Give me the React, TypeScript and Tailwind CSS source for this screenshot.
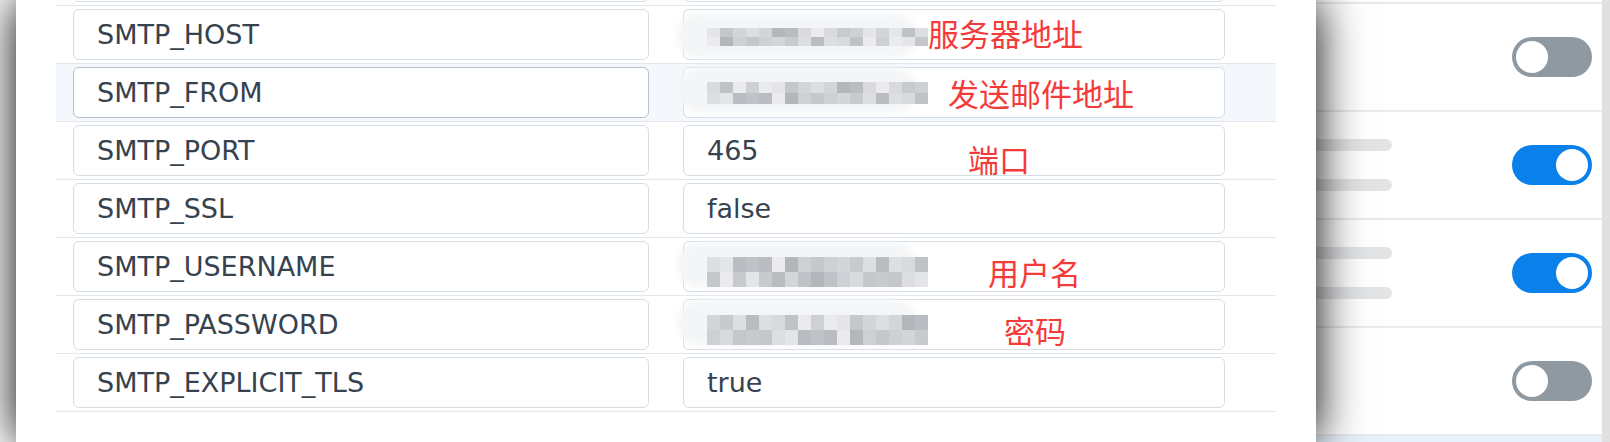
import type { ReactNode } from "react";

const SHADES = [
  "bg-[#c5c7cb]",
  "bg-[#d9dadd]",
  "bg-[#b9bcc1]",
  "bg-[#e4e5e7]",
  "bg-[#cdd0d4]",
  "bg-[#b3b6bb]",
  "bg-[#dddee1]",
  "bg-[#c9cacd]",
  "bg-[#ebebed]",
  "bg-[#bfc2c6]",
  "bg-[#d3d5d8]",
];

type Row = {
  name: string;
  value?: string;
  mosaic?: { rows: number; cellH: number; shift: number; seed: number };
  hover?: boolean;
};

// first row is scrolled almost out of view; only its bottom edge shows
const ROWS: Row[] = [
  { name: "", value: "" },
  { name: "SMTP_HOST", mosaic: { rows: 2, cellH: 9, shift: 2, seed: 1 } },
  { name: "SMTP_FROM", mosaic: { rows: 2, cellH: 11, shift: 0, seed: 4 }, hover: true },
  { name: "SMTP_PORT", value: "465" },
  { name: "SMTP_SSL", value: "false" },
  { name: "SMTP_USERNAME", mosaic: { rows: 2, cellH: 15, shift: 5, seed: 2 } },
  { name: "SMTP_PASSWORD", mosaic: { rows: 2, cellH: 15, shift: 5, seed: 7 } },
  { name: "SMTP_EXPLICIT_TLS", value: "true" },
];

// red notes drawn over the screenshot, x relative to the modal
const NOTES = [
  { text: "服务器地址", cls: "left-[912px] top-[16px]" },
  { text: "发送邮件地址", cls: "left-[932px] top-[76px]" },
  { text: "端口", cls: "left-[952px] top-[142px]" },
  { text: "用户名", cls: "left-[972px] top-[255px]" },
  { text: "密码", cls: "left-[988px] top-[313px]" },
];

function Mosaic({ rows, cellH, shift, seed }: NonNullable<Row["mosaic"]>) {
  return (
    <div className="relative" style={{ marginTop: shift * 2 }}>
      <div className="absolute -left-[30px] -top-[14px] h-[44px] w-[240px] rounded-full bg-[#f3f5f7] blur-[3px]" />
      <div className="relative flex flex-col blur-[0.6px]">
        {Array.from({ length: rows }).map((_, r) => (
          <div key={r} className="flex">
            {Array.from({ length: 17 }).map((_, c) => (
              <div
                key={c}
                className={`w-[13px] ${SHADES[(c * 7 + r * 5 + seed * 3 + ((c * c) % 5)) % SHADES.length]}`}
                style={{ height: cellH }}
              />
            ))}
          </div>
        ))}
      </div>
    </div>
  );
}

function Field({ children, strong }: { children: ReactNode; strong?: boolean }) {
  return (
    <div
      className={`flex h-[51px] items-center rounded-[6px] border bg-white px-[23px] text-[27px] leading-none text-[#37424f] ${
        strong ? "border-[#b8bfc7]" : "border-[#d5dde6]"
      }`}
    >
      {children}
    </div>
  );
}

function Toggle({ on }: { on?: boolean }) {
  return (
    <div
      className={`flex h-[40px] w-[80px] items-center rounded-full p-[4px] ${
        on ? "justify-end bg-[#0a80ea]" : "justify-start bg-[#8f99a2]"
      }`}
    >
      <div className="h-[32px] w-[32px] rounded-full bg-white" />
    </div>
  );
}

function Skeleton() {
  return (
    <div className="flex w-[210px] flex-col gap-[28px]">
      <div className="h-[12px] rounded-full bg-[#e3e4e6]" />
      <div className="h-[12px] rounded-full bg-[#e3e4e6]" />
    </div>
  );
}

export default function App() {
  return (
    <div className="relative h-[442px] w-[1610px] overflow-hidden bg-white font-['DejaVu_Sans',sans-serif]">
      {/* page behind the dialog */}
      <div className="flex h-full">
        <div className="flex-1" />
        <div className="flex w-[420px] flex-col">
          <div className="mt-[2px] h-[2px] bg-[#e6ebf0]" />
          {[false, true, true, false].map((on, i) => (
            <div
              key={i}
              className="flex h-[108px] items-center justify-between border-b-2 border-[#e6ebf0] pr-[10px]"
            >
              {on ? <Skeleton /> : <div />}
              <Toggle on={on} />
            </div>
          ))}
          <div className="flex-1 bg-[#e8f1fb]" />
        </div>
        <div className="w-[8px] bg-[#e0e0e0]" />
      </div>

      {/* dialog */}
      <div className="absolute left-[16px] top-0 h-full w-[1300px] overflow-hidden bg-white px-[40px] shadow-[0_0_45px_rgba(0,0,0,1)]">
        <div className="-mt-[52px]">
          {ROWS.map((row, i) => (
            <div
              key={i}
              className={`flex h-[58px] items-start border-b border-[#e2e7ed] pl-[17px] pt-[3px] ${
                row.hover ? "bg-[#f4f8fc]" : ""
              }`}
            >
              <div className="w-[576px]">
                <Field strong={row.hover}>{row.name}</Field>
              </div>
              <div className="ml-[34px] w-[542px]">
                <Field>{row.mosaic ? <Mosaic {...row.mosaic} /> : row.value}</Field>
              </div>
            </div>
          ))}
        </div>

        {NOTES.map((n) => (
          <div
            key={n.text}
            className={`absolute ${n.cls} text-[31px] leading-[34px] text-[#f53a3a] font-['Noto_Sans_CJK_SC',sans-serif]`}
          >
            {n.text}
          </div>
        ))}
      </div>
    </div>
  );
}
